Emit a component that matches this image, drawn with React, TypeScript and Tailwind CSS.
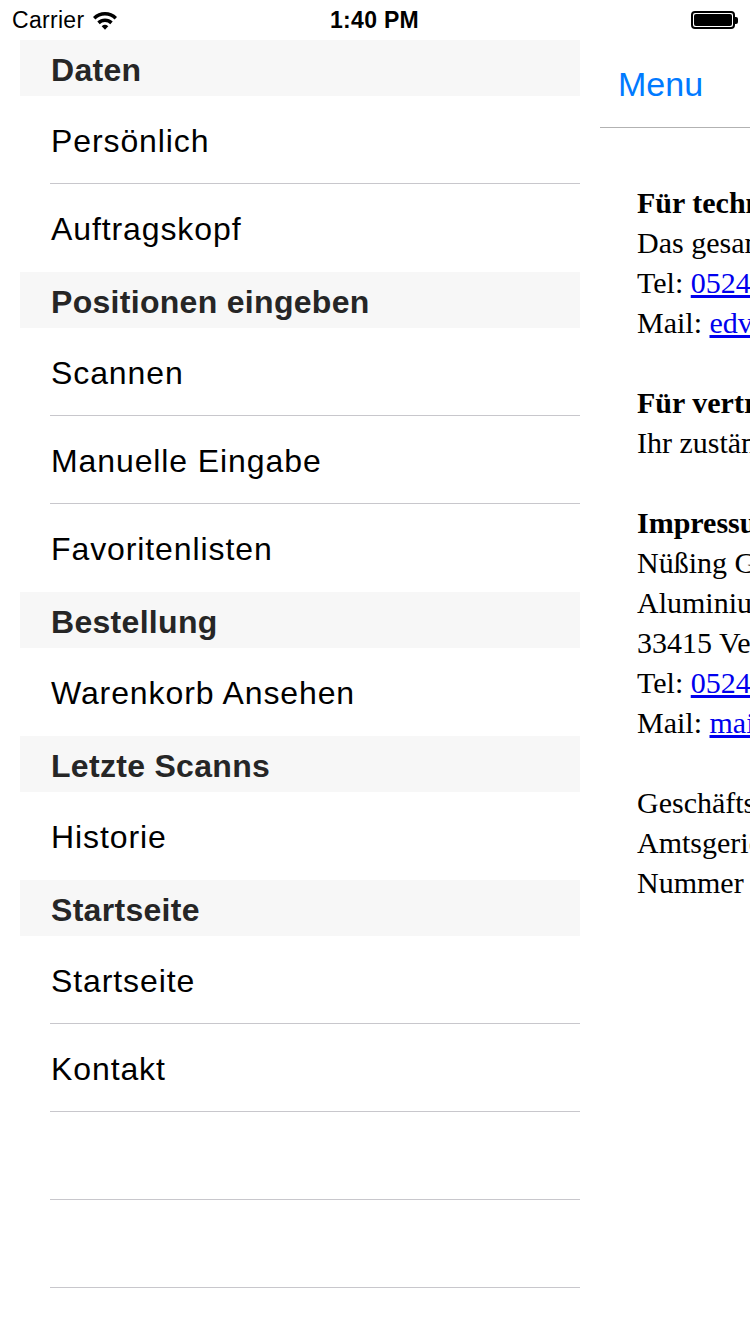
import React from 'react'

type Item = { kind: 'header'; label: string } | { kind: 'row'; label: string; line: boolean }

const menu: Item[] = [
  { kind: 'header', label: 'Daten' },
  { kind: 'row', label: 'Persönlich', line: true },
  { kind: 'row', label: 'Auftragskopf', line: false },
  { kind: 'header', label: 'Positionen eingeben' },
  { kind: 'row', label: 'Scannen', line: true },
  { kind: 'row', label: 'Manuelle Eingabe', line: true },
  { kind: 'row', label: 'Favoritenlisten', line: false },
  { kind: 'header', label: 'Bestellung' },
  { kind: 'row', label: 'Warenkorb Ansehen', line: false },
  { kind: 'header', label: 'Letzte Scanns' },
  { kind: 'row', label: 'Historie', line: false },
  { kind: 'header', label: 'Startseite' },
  { kind: 'row', label: 'Startseite', line: true },
  { kind: 'row', label: 'Kontakt', line: true },
  { kind: 'row', label: '', line: true },
  { kind: 'row', label: '', line: true },
]

function StatusBar() {
  return (
    <div className="h-[40px] flex items-center justify-between px-[12px] text-[23px] text-black font-['Liberation_Sans',Arial,sans-serif] relative">
      <div className="flex items-center gap-[8px]">
        <span className="tracking-[0.3px]">Carrier</span>
        {/* wifi */}
        <svg width="26" height="20" viewBox="0 0 26 20">
          <path d="M1 7 A17 17 0 0 1 25 7 L22.6 9.6 A13.5 13.5 0 0 0 3.4 9.6 Z" fill="#000" />
          <path d="M5.3 11.6 A11 11 0 0 1 20.7 11.6 L18.3 14.2 A7.6 7.6 0 0 0 7.7 14.2 Z" fill="#000" />
          <path d="M9.7 16.3 A5 5 0 0 1 16.3 16.3 L13 19.8 Z" fill="#000" />
        </svg>
      </div>
      <span className="absolute left-[330px] font-semibold tracking-[0.3px]">1:40 PM</span>
      <div className="flex items-center">
        <div className="w-[44px] h-[18px] rounded-[4px] border-2 border-black p-[1px]">
          <div className="w-full h-full bg-black rounded-[2px]" />
        </div>
        <div className="w-[3px] h-[7px] bg-black rounded-r-[2px]" />
      </div>
    </div>
  )
}

function Link({ children }: { children: React.ReactNode }) {
  return <span className="text-[#0000ee] underline">{children}</span>
}

export default function App() {
  return (
    <div className="w-[750px] h-[1334px] bg-white overflow-hidden flex flex-col">
      <StatusBar />
      <div className="flex flex-1 min-h-0">
        <aside className="w-[560px] ml-[20px] shrink-0 font-['Liberation_Sans',Arial,sans-serif]">
          {menu.map((item, i) =>
            item.kind === 'header' ? (
              <div key={i} className="h-[56px] bg-[#f7f7f7] flex items-center pl-[31px] pt-[3px] text-[32px] tracking-[0.3px] font-bold text-[#262626]">
                {item.label}
              </div>
            ) : (
              <div key={i} className="h-[88px] pl-[30px]">
                <div className={`h-full flex items-center pl-[1px] pt-[2px] text-[32px] tracking-[0.9px] text-black ${item.line ? 'border-b border-[#c8c7cc]' : ''}`}>
                  {item.label}
                </div>
              </div>
            )
          )}
        </aside>
        <section className="ml-[20px] flex-1 min-w-0 overflow-hidden">
          <div className="h-[88px] flex items-center pl-[18px] pt-[2px] border-b border-[#b2b2b2] text-[34px] text-[#007aff] font-['Liberation_Sans',Arial,sans-serif]">
            Menu
          </div>
          <div className="pt-[55px] pl-[37px] text-[30px] leading-[40px] text-black whitespace-nowrap font-['Liberation_Serif','Times_New_Roman',serif]">
            <p className="font-bold">Für technische Fragen:</p>
            <p>Das gesamte EDV-Team</p>
            <p>
              Tel: <Link>05241 / 9000-0</Link>
            </p>
            <p>
              Mail: <Link>edv@nuessing.de</Link>
            </p>
            <p className="h-[40px]" />
            <p className="font-bold">Für vertriebliche Fragen:</p>
            <p>Ihr zuständiger Außendienst</p>
            <p className="h-[40px]" />
            <p className="font-bold">Impressum</p>
            <p>Nüßing GmbH</p>
            <p>Aluminiumstraße 1</p>
            <p>33415 Verl</p>
            <p>
              Tel: <Link>05246 / 9000-0</Link>
            </p>
            <p>
              Mail: <Link>mail@nuessing.de</Link>
            </p>
            <p className="h-[40px]" />
            <p>Geschäftsführer: N. N.</p>
            <p>Amtsgericht Gütersloh</p>
            <p>Nummer HRB 1234</p>
          </div>
        </section>
      </div>
    </div>
  )
}
